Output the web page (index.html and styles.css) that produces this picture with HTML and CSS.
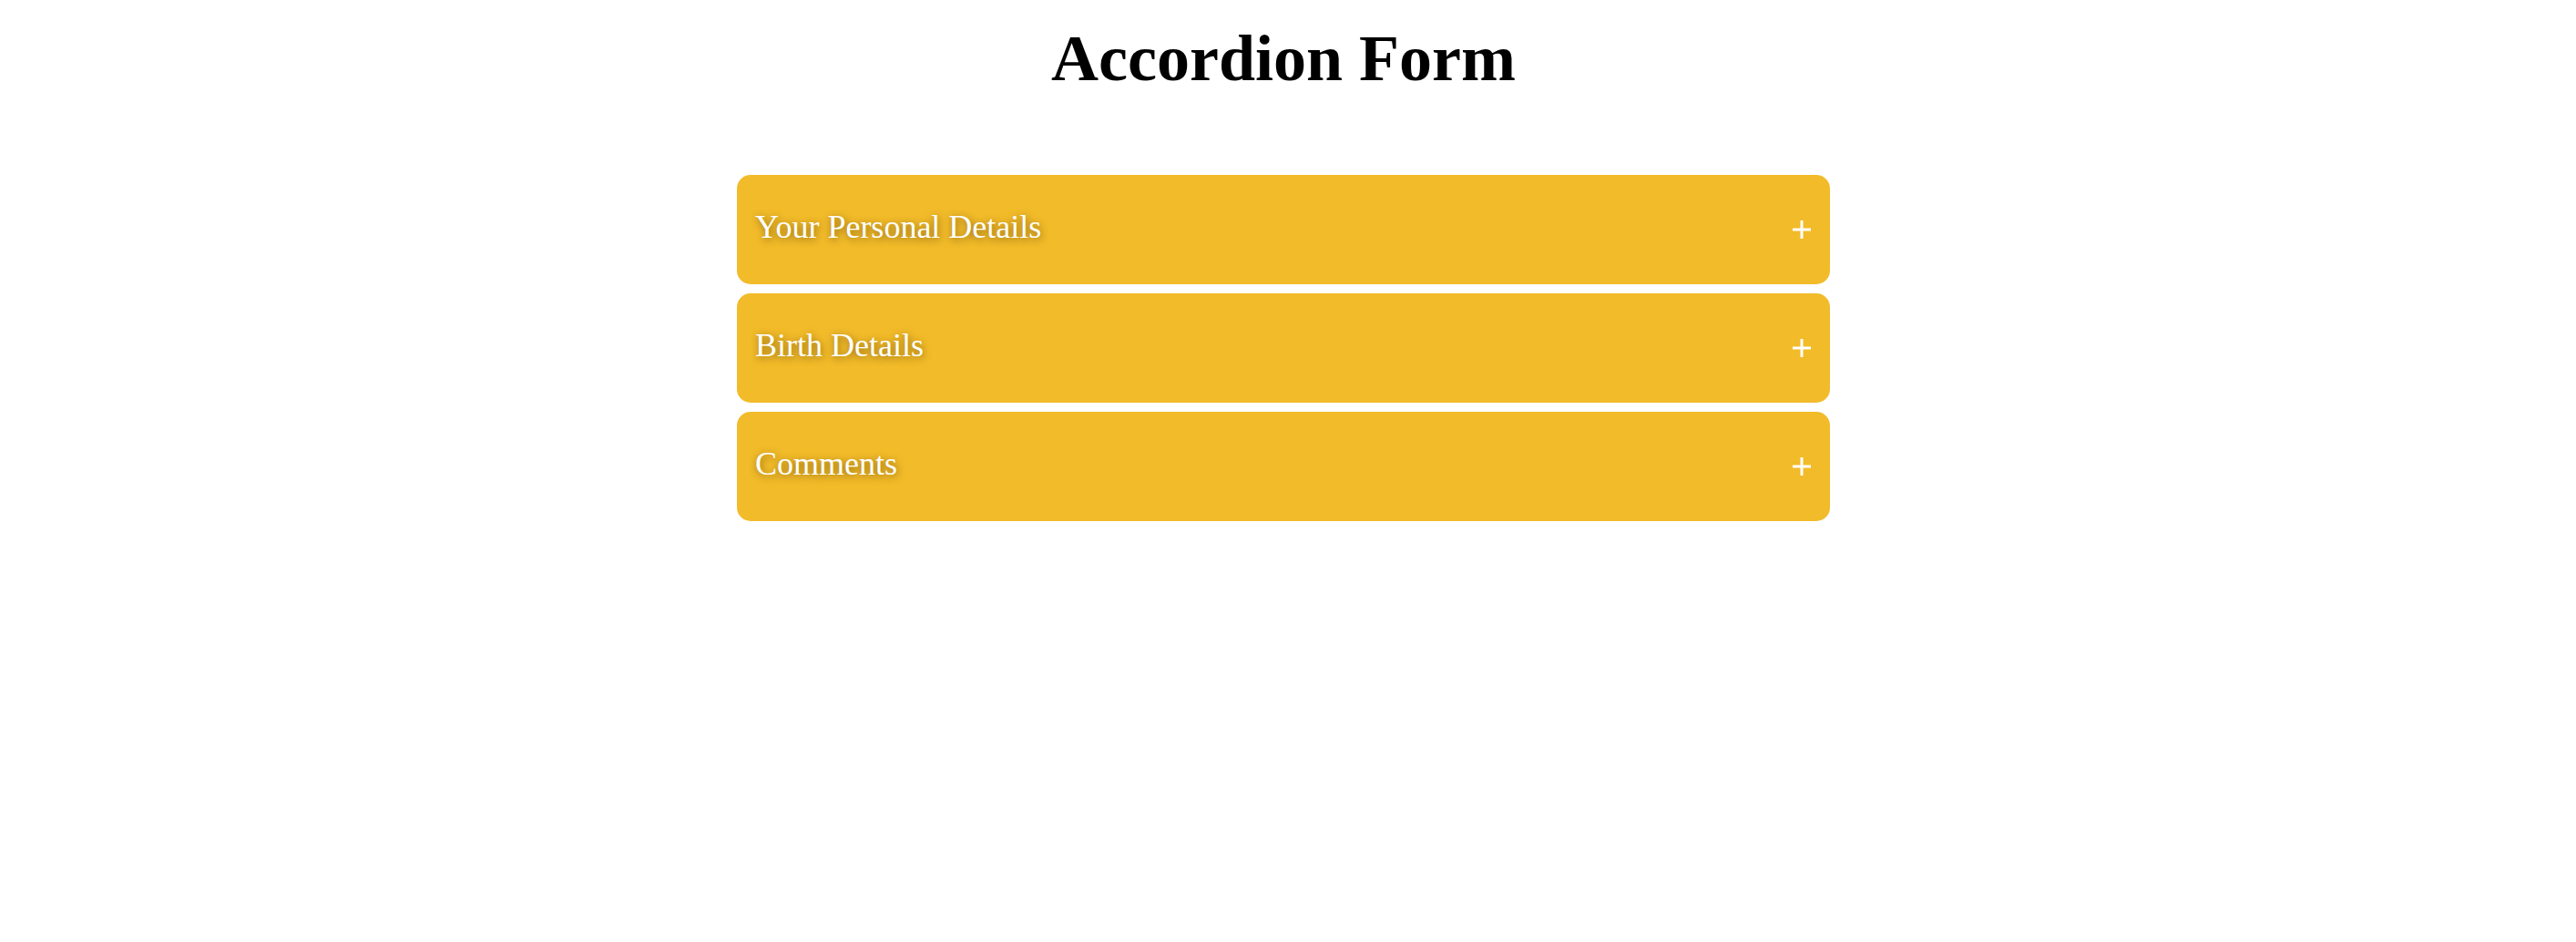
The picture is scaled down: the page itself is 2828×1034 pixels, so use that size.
FILE: index.html
```html
<!DOCTYPE html>
<html lang="en">
<head>
<meta charset="utf-8">
<title>Accordion Form</title>
<link rel="stylesheet" href="styles.css">
</head>
<body>
<main class="page">
  <h1 class="title">Accordion Form</h1>
  <div class="accordion">
    <section class="panel">
      <h2 class="panel-title">Your Personal Details</h2>
      <span class="toggle"><svg width="20" height="20" viewBox="0 0 20 20"><rect x="0" y="8.5" width="20" height="3" fill="#fff"/><rect x="8.5" y="0" width="3" height="20" fill="#fff"/></svg></span>
    </section>
    <section class="panel">
      <h2 class="panel-title">Birth Details</h2>
      <span class="toggle"><svg width="20" height="20" viewBox="0 0 20 20"><rect x="0" y="8.5" width="20" height="3" fill="#fff"/><rect x="8.5" y="0" width="3" height="20" fill="#fff"/></svg></span>
    </section>
    <section class="panel">
      <h2 class="panel-title">Comments</h2>
      <span class="toggle"><svg width="20" height="20" viewBox="0 0 20 20"><rect x="0" y="8.5" width="20" height="3" fill="#fff"/><rect x="8.5" y="0" width="3" height="20" fill="#fff"/></svg></span>
    </section>
  </div>
</main>
</body>
</html>
```
FILE: styles.css
```css
html, body {
  margin: 0;
  background: #ffffff;
}

body {
  padding: 0 10px 0 0;
  font-family: "Liberation Serif", "Times New Roman", serif;
}

.page {
  display: flex;
  flex-direction: column;
  align-items: center;
}

.title {
  margin: 28px 0 0 0;
  font-size: 72px;
  line-height: 72px;
  font-weight: bold;
  color: #000;
}

.accordion {
  width: 1200px;
  margin-top: 92px;
  display: flex;
  flex-direction: column;
  gap: 10px;
}

.panel {
  height: 120px;
  box-sizing: border-box;
  background: #f2bb29;
  border-radius: 15px;
  display: flex;
  align-items: flex-start;
  justify-content: space-between;
  padding: 0 21px 0 20px;
}

.panel-title {
  margin: 37px 0 0 0;
  font-size: 36px;
  line-height: 40px;
  font-weight: normal;
  color: #ffffff;
  text-shadow: 1px 2px 8px rgba(60, 40, 0, 0.6);
}

.toggle {
  align-self: center;
  display: flex;
  width: 20px;
  height: 20px;
}
```
